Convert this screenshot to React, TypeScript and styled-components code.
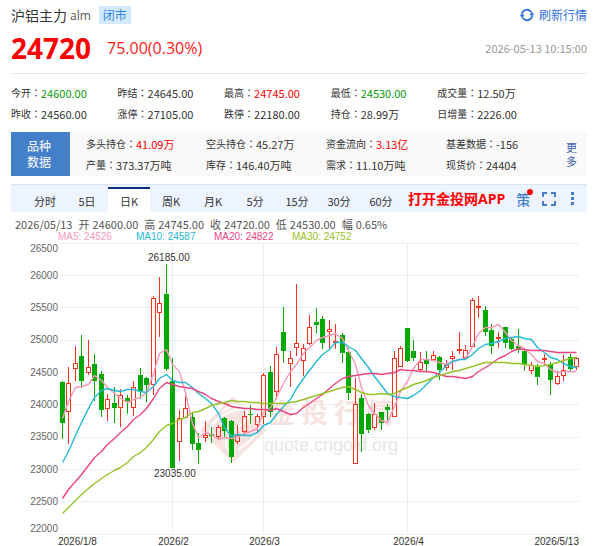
import React from "react";
import styled, { createGlobalStyle } from "styled-components";

const GlobalStyle = createGlobalStyle`
  * { box-sizing: border-box; }
  body {
    margin: 0;
    background: #fff;
    color: #333;
    font-family: "Noto Sans CJK SC", sans-serif;
    font-size: 11px;
  }
  button { font: inherit; color: inherit; background: none; border: 0; padding: 0; cursor: pointer; }
  a { color: inherit; text-decoration: none; }
`;

type Tone = "up" | "down" | "plain";
const toneColor: Record<Tone, string> = { up: "#ff0000", down: "#0a9a0a", plain: "#333" };

const Content = styled.div`
  padding: 6px 13px 0 11px;
`;

const TitleRow = styled.header`
  display: flex;
  align-items: center;
  height: 18px;
`;

const Title = styled.h1`
  margin: 0;
  font-size: 14px;
  line-height: 18px;
  font-weight: 400;
`;

const Code = styled.span`
  margin-left: 3px;
  padding-top: 1px;
  font: 12px/18px "Open Sans", sans-serif;
  color: #555;
`;

const Badge = styled.span`
  margin-left: 8px;
  padding: 0 4px;
  font-size: 12px;
  line-height: 18px;
  color: #2e8ae6;
  background: #d5e9fd;
`;

const RefreshButton = styled.button`
  display: flex;
  align-items: center;
  gap: 5px;
  margin-left: auto;
  font-size: 12px;
  line-height: 18px;
  color: #2f6fdc;
`;

const PriceRow = styled.div`
  display: flex;
  align-items: center;
  height: 50px;
  padding-bottom: 2px;
  border-bottom: 1px solid #e8e8e8;
`;

const Price = styled.strong`
  font: 700 28px/36px "Open Sans", sans-serif;
  color: #ff0000;
`;

const Change = styled.span`
  margin-left: 16px;
  font: 16px/24px "Open Sans", sans-serif;
  color: #ff1a1a;
`;

const Time = styled.time`
  margin-left: auto;
  color: #999;
`;

const Stats = styled.dl`
  display: grid;
  grid-template-columns: repeat(4, 37fr) 52fr;
  margin: 0;
  padding: 8px 0;
`;

const Stat = styled.div`
  display: flex;
  align-items: center;
  height: 21px;
  white-space: nowrap;
`;

const Label = styled.dt`
  font-size: 10px;
`;

const Colon = styled.span`
  font-family: "Noto Sans CJK TC", sans-serif;
`;

const Value = styled.dd<{ $tone: Tone }>`
  margin: 0;
  color: ${(p) => toneColor[p.$tone]};
`;

const Variety = styled.section`
  display: flex;
  height: 44px;
  background: #f9f9f9;
`;

const VarietyName = styled.h2`
  display: flex;
  align-items: center;
  justify-content: center;
  width: 59px;
  margin: 0;
  padding: 0 16px;
  font-size: 12px;
  font-weight: 400;
  line-height: 16px;
  color: #fff;
  background: #447fca;
`;

const VarietyGrid = styled.dl`
  display: grid;
  flex: 1;
  grid-template-columns: repeat(4, 1fr);
  margin: 0;
  padding: 1px 0 1px 16px;
`;

const MoreLink = styled.a`
  width: 12px;
  margin: 8px 9px 0 0;
  line-height: 14px;
  color: #3c5fa5;
`;

const TabBar = styled.nav`
  display: flex;
  align-items: center;
  height: 28px;
  margin-top: 8px;
  padding-left: 13px;
  border-top: 1px solid #d9e3f3;
  background: #edf4ff;
`;

const Tab = styled.button<{ $active?: boolean }>`
  align-self: flex-end;
  width: 42px;
  height: 25px;
  line-height: 20px;
  border-top: 2px solid ${(p) => (p.$active ? "#0b2f86" : "transparent")};
  background: ${(p) => (p.$active ? "#fff" : "transparent")};
`;

const AppLink = styled.a`
  margin-left: 6px;
  font: 700 14px/20px "Open Sans", "Noto Sans CJK SC", sans-serif;
  color: #ff0000;
  white-space: nowrap;
`;

const StrategyLink = styled.a`
  position: relative;
  margin-left: 11px;
  font-size: 14px;
  font-weight: 500;
  line-height: 20px;
  color: #447fca;
`;

const Dot = styled.i`
  position: absolute;
  top: 0;
  right: -3px;
  width: 6px;
  height: 6px;
  border-radius: 50%;
  background: #ff0000;
`;

const IconButton = styled.button`
  display: flex;
  margin-left: 12px;
  color: #447fca;
`;

const Quote = styled.div`
  display: flex;
  gap: 6px;
  padding: 5px 4px 0;
  line-height: 14px;
  color: #555;
  white-space: nowrap;
`;

const QuoteItem = styled.span`
  display: flex;
  gap: 3px;
`;

const Legend = styled.div`
  display: grid;
  grid-template-columns: repeat(4, 78px);
  padding-left: 47px;
  font: 10px/12px "Liberation Sans", sans-serif;
`;

const LegendItem = styled.span<{ $color: string }>`
  color: ${(p) => p.$color};
`;

const ChartSvg = styled.svg`
  display: block;
  width: 100%;
  height: auto;
  font: 10px "Liberation Sans", sans-serif;
`;

const stats: [string, string, Tone][] = [
  ["今开", "24600.00", "down"],
  ["昨结", "24645.00", "plain"],
  ["最高", "24745.00", "up"],
  ["最低", "24530.00", "down"],
  ["成交量", "12.50万", "plain"],
  ["昨收", "24560.00", "plain"],
  ["涨停", "27105.00", "plain"],
  ["跌停", "22180.00", "plain"],
  ["持仓", "28.99万", "plain"],
  ["日增量", "2226.00", "plain"],
];

const variety: [string, string, Tone][] = [
  ["多头持仓", "41.09万", "up"],
  ["空头持仓", "45.27万", "plain"],
  ["资金流向", "3.13亿", "up"],
  ["基差数据", "-156", "plain"],
  ["产量", "373.37万吨", "plain"],
  ["库存", "146.40万吨", "plain"],
  ["需求", "11.10万吨", "plain"],
  ["现货价", "24404", "plain"],
];

const tabs = ["分时", "5日", "日K", "周K", "月K", "5分", "15分", "30分", "60分"];

const quote = [
  ["开", "24600.00"],
  ["高", "24745.00"],
  ["收", "24720.00"],
  ["低", "24530.00"],
  ["幅", "0.65%"],
];

// Chart rows: direction, then high, body top, body bottom and low on the vertical axis.
type Candle = ["r" | "g", number, number, number, number];
const candles: Candle[] = [
  ["g", 381, 382, 423, 439], ["r", 367, 383, 411, 444], ["r", 346, 363, 368, 381], ["g", 335, 356, 381, 388],
  ["r", 340, 367, 372, 375], ["g", 354, 364, 381, 401], ["g", 371, 374, 410, 417], ["r", 394, 399, 408, 421],
  ["g", 387, 403, 408, 423], ["r", 389, 395, 407, 427], ["g", 395, 398, 401, 414], ["r", 381, 387, 407, 416],
  ["g", 368, 375, 391, 399], ["g", 377, 378, 385, 402], ["r", 296, 298, 384, 395], ["r", 277, 303, 312, 337],
  ["g", 264, 294, 369, 371], ["g", 358, 381, 468, 468], ["r", 410, 418, 441, 461], ["r", 396, 408, 417, 417],
  ["g", 412, 417, 444, 450], ["g", 433, 443, 450, 464], ["r", 421, 435, 437, 442], ["g", 427, 434, 436, 443],
  ["r", 425, 427, 436, 440], ["g", 417, 418, 431, 437], ["g", 420, 421, 457, 463], ["r", 425, 435, 441, 444],
  ["r", 411, 416, 431, 435], ["g", 405, 414, 415, 424], ["r", 414, 416, 424, 433], ["r", 373, 375, 416, 424],
  ["g", 366, 372, 412, 417], ["r", 347, 354, 391, 399], ["g", 307, 332, 351, 363], ["r", 351, 358, 363, 387],
  ["r", 284, 343, 347, 356], ["r", 344, 348, 360, 376], ["r", 315, 327, 343, 345], ["g", 308, 322, 325, 333],
  ["g", 316, 319, 343, 349], ["r", 320, 329, 331, 350], ["r", 324, 341, 342, 349], ["g", 333, 335, 353, 363],
  ["g", 348, 352, 393, 400], ["r", 378, 404, 463, 463], ["g", 394, 398, 434, 452], ["g", 413, 414, 430, 433],
  ["r", 403, 414, 427, 430], ["g", 412, 412, 423, 430], ["g", 404, 407, 410, 420], ["r", 351, 358, 416, 416],
  ["r", 346, 348, 366, 366], ["g", 328, 328, 361, 362], ["g", 340, 351, 358, 361], ["r", 352, 362, 369, 372],
  ["g", 351, 359, 364, 371], ["r", 351, 355, 359, 361], ["g", 356, 357, 370, 380], ["r", 360, 365, 367, 371],
  ["r", 351, 356, 358, 370], ["r", 332, 349, 350, 354], ["r", 345, 350, 357, 358], ["r", 298, 300, 346, 347],
  ["r", 296, 306, 307, 318], ["g", 306, 310, 332, 336], ["g", 324, 330, 346, 354], ["r", 332, 337, 338, 348],
  ["g", 327, 327, 343, 348], ["g", 337, 339, 349, 350], ["g", 329, 346, 350, 353], ["g", 350, 351, 365, 371],
  ["r", 362, 365, 370, 374], ["g", 364, 366, 377, 385], ["r", 354, 358, 359, 366], ["g", 362, 364, 380, 395],
  ["r", 371, 376, 383, 385], ["r", 355, 370, 375, 381], ["g", 354, 357, 369, 372], ["r", 357, 358, 366, 370],
];

const averages = [
  {
    name: "MA5: 24526",
    color: "#f799b8",
    points: [
      418, 401, 387, 386, 384, 375, 380, 387, 393, 398, 402, 399, 397, 392, 373, 353, 349, 364, 371, 392, 423, 437,
      432, 434, 439, 437, 438, 437, 433, 431, 428, 412, 407, 397, 383, 371, 364, 353, 347, 340, 337, 335, 333, 338,
      350, 364, 387, 405, 413, 420, 422, 406, 391, 381, 368, 359, 359, 360, 362, 364, 361, 359, 358, 346, 333, 327,
      327, 324, 332, 340, 345, 348, 354, 361, 363, 369, 372, 371, 371, 371,
    ],
  },
  {
    name: "MA10: 24587",
    color: "#22bad6",
    points: [
      462, 451, 435, 422, 408, 397, 390, 388, 390, 391, 389, 389, 391, 392, 386, 378, 374, 380, 382, 382, 387, 393,
      398, 403, 413, 427, 436, 434, 435, 435, 432, 425, 422, 414, 406, 399, 388, 378, 370, 361, 354, 349, 342, 342,
      346, 350, 358, 367, 376, 385, 393, 396, 397, 398, 395, 390, 384, 377, 372, 365, 361, 359, 359, 354, 348, 344,
      343, 341, 338, 337, 336, 338, 339, 347, 352, 357, 359, 363, 366, 367,
    ],
  },
  {
    name: "MA20: 24822",
    color: "#ea4580",
    points: [
      498, 489, 481, 474, 465, 457, 451, 444, 438, 432, 426, 419, 414, 408, 398, 388, 382, 384, 386, 387, 388, 391,
      394, 398, 401, 403, 406, 407, 408, 408, 409, 409, 410, 408, 411, 414, 413, 407, 403, 398, 394, 388, 383, 378,
      376, 375, 374, 373, 373, 374, 373, 372, 369, 370, 370, 371, 371, 372, 374, 376, 376, 377, 378, 376, 371, 367,
      363, 358, 355, 351, 348, 349, 350, 350, 350, 351, 352, 352, 352, 352,
    ],
  },
  {
    name: "MA30: 24752",
    color: "#98c22a",
    points: [
      513, 507, 500, 494, 488, 483, 478, 474, 470, 467, 462, 456, 452, 447, 439, 431, 425, 423, 419, 417, 412, 411,
      408, 405, 403, 402, 400, 401, 401, 402, 402, 403, 403, 403, 403, 402, 401, 399, 397, 395, 393, 391, 389, 387,
      386, 389, 392, 394, 394, 393, 394, 393, 390, 387, 384, 382, 380, 377, 375, 373, 371, 370, 368, 366, 364, 362,
      362, 362, 362, 363, 363, 364, 365, 366, 365, 364, 362, 360, 358, 357,
    ],
  },
];

const priceTicks = [
  { label: "26500", line: 243.5, text: 252 },
  { label: "26000", line: 275.5, text: 279 },
  { label: "25500", line: 307.5, text: 311 },
  { label: "25000", line: 340.5, text: 343 },
  { label: "24500", line: 372.5, text: 376 },
  { label: "24000", line: 404.5, text: 408 },
  { label: "23500", line: 437.5, text: 440 },
  { label: "23000", line: 469.5, text: 473 },
  { label: "22500", line: 501.5, text: 505 },
  { label: "22000", line: 534.5, text: 532 },
];

const monthTicks = [
  { label: "2026/2", x: 172.5 },
  { label: "2026/3", x: 263.5 },
  { label: "2026/4", x: 407.5 },
];

const candleX = (i: number) => Math.floor(62 + i * 6.515) + 0.5;

function RefreshIcon() {
  return (
    <svg width="14" height="14" viewBox="0 0 14 14" aria-hidden="true">
      <path d="M1.9 6.6A5.1 5.1 0 0 1 11.3 4.2M12.1 7.4A5.1 5.1 0 0 1 2.7 9.8" fill="none" stroke="#2f6fdc" strokeWidth="1.8" />
      <path d="M9.4 7.2H14.2L12 3.8zM4.6 6.8H-.2L2 10.2z" fill="#2f6fdc" />
    </svg>
  );
}

function Watermark() {
  return (
    <g>
      <g fill="#f7e3e0">
        <path d="M233 396L267 430L233 463L200 430Z" />
        <g fill="none" stroke="#fff" strokeWidth="2">
          <path d="M209 434C212 420 224 413 236 410C246 408 252 414 247 420C240 428 229 431 226 441C225 446 228 451 232 453" />
          <path d="M259 428C254 440 245 444 238 450M222 412C230 404 243 404 250 410" />
        </g>
      </g>
      <text x="268 301 334 367" y="423" fontSize="27" fontWeight="700" fill="#f7e3e0" fontFamily="Noto Sans CJK SC, sans-serif">
        金投行情
      </text>
      <text x="264" y="451" fontSize="18" fill="#e6e6e6">quote.cngold.org</text>
    </g>
  );
}

function CandleMark({ candle, x }: { candle: Candle; x: number }) {
  const [dir, high, top, bottom, low] = candle;
  if (dir === "g") {
    return (
      <g fill="#00a800">
        <rect x={x - 0.5} y={high} width="1" height={low - high} />
        <rect x={x - 2.5} y={top} width="5" height={Math.max(1, bottom - top)} />
      </g>
    );
  }
  return (
    <g stroke="#f5301e" fill="none">
      <path d={`M${x} ${high}V${top}M${x} ${bottom}V${low}`} />
      <rect x={x - 2} y={top + 0.5} width="4" height={Math.max(0, bottom - top)} />
    </g>
  );
}

function Chart() {
  return (
    <ChartSvg viewBox="0 243 600 303" role="img" aria-label="日K">
      <g stroke="#eeeeee">
        {priceTicks.map((t) => (
          <line key={t.label} x1="59" x2="579" y1={t.line} y2={t.line} />
        ))}
        {monthTicks.map((t) => (
          <line key={t.label} x1={t.x} x2={t.x} y1="243" y2="534" />
        ))}
      </g>
      <Watermark />
      <g fill="#666" textAnchor="end">
        {priceTicks.map((t) => (
          <text key={t.label} x="58" y={t.text}>{t.label}</text>
        ))}
      </g>
      {candles.map((c, i) => (
        <CandleMark key={i} candle={c} x={candleX(i)} />
      ))}
      {averages.map((a) => (
        <polyline
          key={a.name}
          points={a.points.map((y, i) => `${candleX(i)},${y + 0.5}`).join(" ")}
          fill="none"
          stroke={a.color}
          strokeWidth="1.4"
          strokeLinejoin="round"
        />
      ))}
      <g fill="#333">
        <text x="148" y="261">26185.00</text>
        <text x="154" y="477">23035.00</text>
        <text x="58" y="545">2026/1/8</text>
        <g textAnchor="middle">
          {monthTicks.map((t) => (
            <text key={t.label} x={t.x + 1} y="545">{t.label}</text>
          ))}
        </g>
        <text x="579" y="545" textAnchor="end">2026/5/13</text>
      </g>
    </ChartSvg>
  );
}

function StatItem({ label, value, tone }: { label: string; value: string; tone: Tone }) {
  return (
    <Stat>
      <Label>
        {label}
        <Colon>：</Colon>
      </Label>
      <Value $tone={tone}>{value}</Value>
    </Stat>
  );
}

export default function App() {
  return (
    <main>
      <GlobalStyle />
      <Content>
        <TitleRow>
          <Title>沪铝主力</Title>
          <Code>alm</Code>
          <Badge>闭市</Badge>
          <RefreshButton type="button">
            <RefreshIcon />
            刷新行情
          </RefreshButton>
        </TitleRow>
        <PriceRow>
          <Price>24720</Price>
          <Change>75.00(0.30%)</Change>
          <Time dateTime="2026-05-13T10:15:00">2026-05-13 10:15:00</Time>
        </PriceRow>
        <Stats>
          {stats.map(([label, value, tone]) => (
            <StatItem key={label} label={label} value={value} tone={tone} />
          ))}
        </Stats>
        <Variety>
          <VarietyName>品种数据</VarietyName>
          <VarietyGrid>
            {variety.map(([label, value, tone]) => (
              <StatItem key={label} label={label} value={value} tone={tone} />
            ))}
          </VarietyGrid>
          <MoreLink href="#more">更多</MoreLink>
        </Variety>
        <TabBar>
          {tabs.map((t) => (
            <Tab key={t} type="button" $active={t === "日K"}>{t}</Tab>
          ))}
          <AppLink href="#app">打开金投网APP</AppLink>
          <StrategyLink href="#strategy">
            策
            <Dot />
          </StrategyLink>
          <IconButton type="button" aria-label="全屏">
            <svg width="14" height="14" viewBox="0 0 14 14" fill="none" stroke="currentColor" strokeWidth="2">
              <path d="M5 1H1V5M9 1H13V5M5 13H1V9M9 13H13V9" />
            </svg>
          </IconButton>
          <IconButton type="button" aria-label="菜单">
            <svg width="9" height="14" viewBox="0 0 9 14" fill="currentColor">
              <path d="M3 0h3v3H3zM3 5h3v3H3zM3 10h3v3H3z" />
            </svg>
          </IconButton>
        </TabBar>
        <Quote>
          <span>2026/05/13</span>
          {quote.map(([label, value]) => (
            <QuoteItem key={label}>
              <span>{label}</span>
              <span>{value}</span>
            </QuoteItem>
          ))}
        </Quote>
        <Legend>
          {averages.map((a) => (
            <LegendItem key={a.name} $color={a.color}>{a.name}</LegendItem>
          ))}
        </Legend>
      </Content>
      <Chart />
    </main>
  );
}
